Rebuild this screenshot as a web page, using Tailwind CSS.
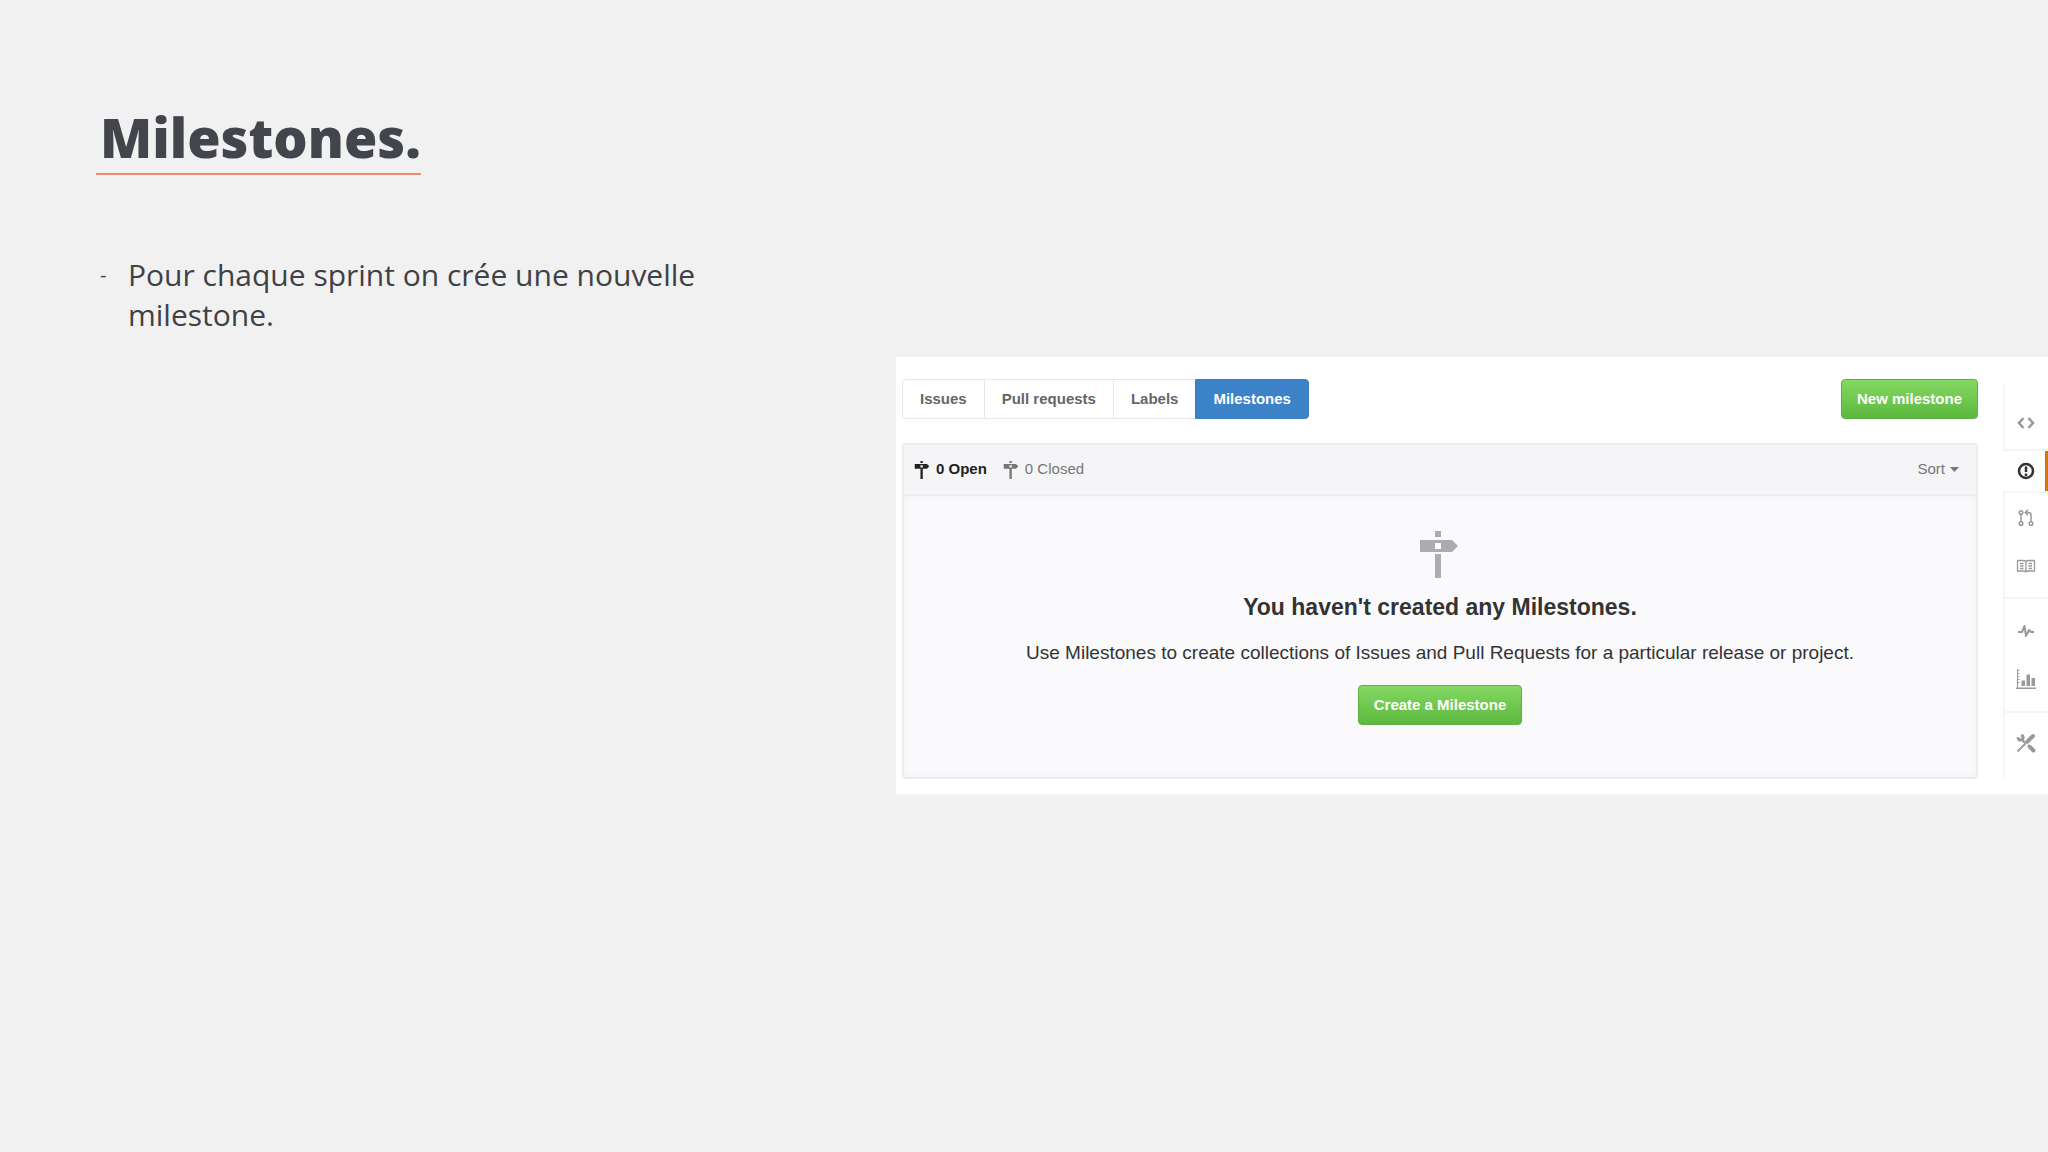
<!DOCTYPE html>
<html lang="fr">

<head>
    <meta charset="UTF-8" />
    <meta name="viewport" content="width=device-width, initial-scale=1.0" />
    <script src="https://cdn.jsdelivr.net/npm/@tailwindcss/browser@4"></script>
    <title>Milestones</title>
</head>

<body class="bg-[#f1f1f2] min-h-screen grid grid-cols-[7fr_9fr] items-start text-[#3f4145]">
    <section class="pt-26 pl-24 font-['Open_Sans',sans-serif]">
        <h1 class="inline-block border-b-2 border-[#ea8a6e] pl-1 pb-[3px] text-[54px] leading-[66px] font-extrabold text-[#42464c]">Milestones.</h1>
        <ul class="mt-20 max-w-2xl px-1">
            <li class="flex gap-5 text-[30px] leading-10">
                <span class="w-2 text-xl leading-10">-</span>
                <p class="flex-1 pr-16">Pour chaque sprint on crée une nouvelle milestone.</p>
            </li>
        </ul>
    </section>

    <section class="mt-[357px] flex bg-white pb-[15px] pl-1.5 font-['Liberation_Sans',Arial,sans-serif]">
        <div class="flex-1 pt-[22px]">
            <!-- Onglets -->
            <div class="flex items-center justify-between">
                <nav class="flex h-10 text-[15px] font-bold text-[#666]">
                    <a href="#" class="flex items-center rounded-l border border-[#e8e8ec] px-[17px]">Issues</a>
                    <a href="#" class="flex items-center border-y border-r border-[#e8e8ec] px-[17px]">Pull requests</a>
                    <a href="#" class="flex items-center border-y border-[#e8e8ec] px-[17px]">Labels</a>
                    <a href="#" class="flex items-center rounded-r border border-[#3a7fc4] bg-[#3c82c8] px-[17px] text-white">Milestones</a>
                </nav>
                <button class="h-10 rounded border border-[#5fb044] bg-linear-to-b from-[#84d962] to-[#5cb83e] px-[15px] text-[15px] font-bold text-white">New milestone</button>
            </div>

            <!-- Liste des milestones -->
            <div class="mt-6 rounded border-2 border-[#ececf0] bg-[#fafafc]">
                <div class="flex h-[51px] items-center border-b-2 border-[#ececf0] bg-[#f5f5f7] px-2.5 text-[15px] text-[#767676]">
                    <a href="#" class="flex items-center gap-1.5 font-bold text-[#222]">
                        <svg class="h-[18px] w-4" viewBox="0 0 38 47" fill="currentColor"><path d="M15 0h6v5h-6zM0 8h32l6 6-6 6H0zM15 20h6v27h-6z" /><path fill="#f5f5f7" d="M15 11h6v6h-6z" /></svg>
                        0 Open
                    </a>
                    <a href="#" class="ml-4 flex items-center gap-1.5">
                        <svg class="h-[18px] w-4" viewBox="0 0 38 47" fill="currentColor"><path d="M15 0h6v5h-6zM0 8h32l6 6-6 6H0zM15 20h6v27h-6z" /><path fill="#f5f5f7" d="M15 11h6v6h-6z" /></svg>
                        0 Closed
                    </a>
                    <button class="ml-auto flex items-center gap-[5px] pr-[7px]">
                        Sort
                        <svg class="h-[5px] w-[9px]" viewBox="0 0 9 5" fill="currentColor"><path d="M0 0h9L4.500 5z" /></svg>
                    </button>
                </div>
                <div class="flex h-[281px] flex-col items-center pt-[35px] text-[#333] inset-shadow-[0_0_6px_#f1f1f4]">
                    <svg class="h-12 w-10" viewBox="0 0 40 48" fill="#acacae"><path d="M15 0h6v6h-6zM0 9h32l6 6-6 6H0zM15 23h6v24h-6z" /><path fill="#fff" d="M15 12h6v6h-6z" /></svg>
                    <h2 class="mt-3 text-[23px] leading-8 font-bold">You haven't created any Milestones.</h2>
                    <p class="mt-4 text-[19px] leading-7">Use Milestones to create collections of Issues and Pull Requests for a particular release or project.</p>
                    <button class="mt-[18px] h-10 rounded border border-[#5fb044] bg-linear-to-b from-[#84d962] to-[#5cb83e] px-[15px] text-[15px] font-bold text-white">Create a Milestone</button>
                </div>
            </div>
        </div>

        <!-- Menu du dépôt -->
        <nav class="ml-[25px] mt-7 flex w-[45px] flex-col text-[#999]">
            <div class="flex h-[66px] items-center justify-center border-b-2 border-l-2 border-[#f5f4f8] pt-3 pr-0.5">
                <a href="#" aria-label="Code">
                    <svg class="size-5" viewBox="0 0 20 20" fill="none" stroke="currentColor" stroke-width="2.500"><path d="M7.500 5 3 10l4.500 5M12.500 5l4.500 5-4.500 5" /></svg>
                </a>
            </div>
            <a href="#" aria-label="Issues" class="flex h-10 items-center justify-center border-r-3 border-[#d9730d] pl-1 text-[#333]">
                <svg class="size-5" viewBox="0 0 20 20" fill="none" stroke="currentColor" stroke-width="2.500"><circle cx="10" cy="10" r="7" /><path d="M10 5.500v5.500M10 12.500v2.500" /></svg>
            </a>
            <div class="flex h-[108px] flex-col items-center gap-7 border-y-2 border-l-2 border-[#f5f4f8] pt-[15px] pr-0.5">
                <a href="#" aria-label="Pull requests">
                    <svg class="size-5" viewBox="0 0 20 20" fill="none" stroke="currentColor" stroke-width="1.500"><circle cx="5" cy="4.500" r="1.800" /><circle cx="5" cy="15.500" r="1.800" /><circle cx="15" cy="15.500" r="1.800" /><path d="M5 6.500v7M15 13.500V7q0-2.500-2.500-2.500H10M12 1.800 9.300 4.500 12 7.200" /></svg>
                </a>
                <a href="#" aria-label="Wiki">
                    <svg class="size-5" viewBox="0 0 20 20" fill="none" stroke="currentColor" stroke-width="1.300"><path d="M10 5.500Q9 4.500 7 4.500H2q-.5 0-.5.500v10h7l1.500 1 1.500-1h7V5q0-.500-.500-.500h-5q-2 0-3 1zV16M4 7.500h3.500M4 10h3.500M4 12.500h3.500M12.500 7.500H16M12.500 10H16M12.500 12.500H16" /></svg>
                </a>
            </div>
            <div class="flex h-28 flex-col items-center gap-7 border-l-2 border-[#f5f4f8] pt-[22px] pr-0.5">
                <a href="#" aria-label="Pulse">
                    <svg class="size-5" viewBox="0 0 20 20" fill="none" stroke="currentColor" stroke-width="2" stroke-linejoin="round"><path d="M2 11h4l2.500-6 1.500 10 3-6 2 2h3" /></svg>
                </a>
                <a href="#" aria-label="Graphs">
                    <svg class="size-5" viewBox="0 0 20 20" fill="currentColor"><path d="M0 18.500h20V20H0zM1 0h1v19H1zM2 1h1.500v1H2zM2 4h1.500v1H2zM2 7h1.500v1H2zM2 10h1.500v1H2zM2 13h1.500v1H2zM5.500 11.500H9V17H5.500zM10.500 5.500H14V17h-3.500zM15.500 9H19v8h-3.500z" /></svg>
                </a>
            </div>
            <div class="flex flex-1 justify-center border-t-2 border-l-2 border-[#f5f4f8] pt-5 pr-0.5">
                <a href="#" aria-label="Settings">
                    <svg class="size-5" viewBox="0 0 20 20" fill="none" stroke="currentColor"><path stroke-width="1.800" d="M1.500 18.500 11 9" /><path stroke-width="4" stroke-linecap="round" d="m11.500 8.500 5.500-5.500M14 14l3.500 3.500" /><path stroke-width="3" d="M1.800 4.200q.700 3.500 4 2.800Q8.300 5 5.800 1.600" /><path stroke-width="2.500" d="m6 6.500 2.800 3M12 12l2 2" /></svg>
                </a>
            </div>
        </nav>
    </section>
</body>

</html>
